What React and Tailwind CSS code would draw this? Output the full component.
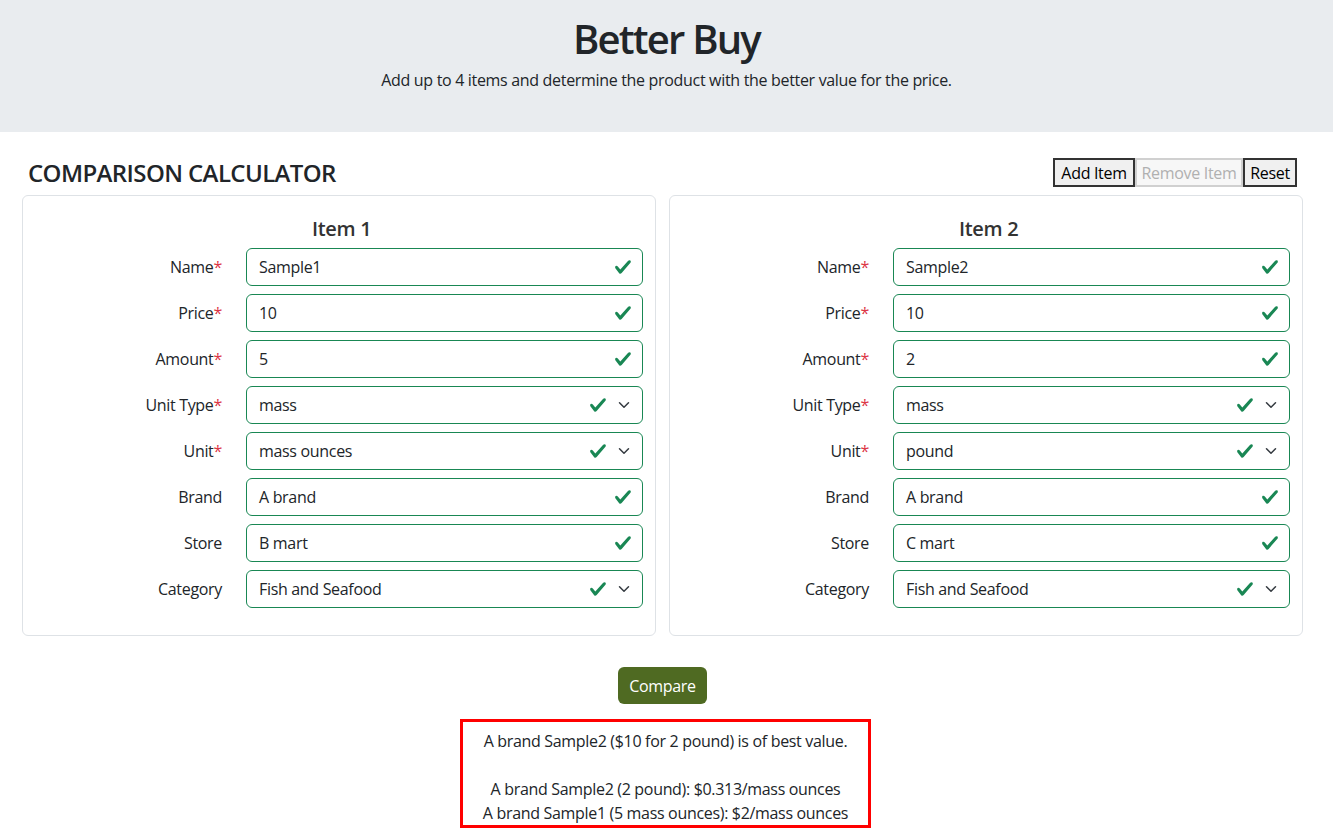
import React from 'react';

const font = { fontFamily: '"Open Sans", "Noto Sans", sans-serif' };

/* bootstrap-style valid check + select chevron */
const Check = () => (
  <svg viewBox="0 0 8 8" className="w-[18px] h-[18px]">
    <path fill="#198754" d="M2.3 6.73.6 4.53c-.4-1.04.46-1.4 1.1-.8l1.1 1.4 3.4-3.8c.6-.63 1.6-.27 1.2.7l-4 4.6c-.43.5-.8.4-1.1.1z" />
  </svg>
);

const Chevron = () => (
  <svg viewBox="0 0 16 16" className="w-4 h-3">
    <path fill="none" stroke="#343a40" strokeWidth="2" strokeLinecap="round" strokeLinejoin="round" d="m2 5 6 6 6-6" />
  </svg>
);

const Field = ({ label, required, value, select }) => (
  <>
    <label className="text-right text-[16px] text-[#212529]">
      {label}
      {required && <span className="text-[#dc3545]">*</span>}
    </label>
    <div className="h-[38px] border border-[#198754] rounded-md flex items-center pl-3 pr-[10px] text-[16px] text-[#212529]">
      <span className="flex-1">{value}</span>
      {select ? (
        <div className="flex items-center gap-[9px]">
          <Check />
          <Chevron />
        </div>
      ) : (
        <Check />
      )}
    </div>
  </>
);

const ItemCard = ({ title, item }) => (
  <div className="w-[634px] border border-[#dee2e6] rounded-md pt-[21px] pb-[27px]">
    <div className="grid grid-cols-[199px_397px] gap-x-6 gap-y-2 items-center">
      <div />
      <h5 className="text-[20px] leading-6 font-semibold text-[#333] mb-[-1px] pl-[66px]">{title}</h5>
      <Field label="Name" required value={item.name} />
      <Field label="Price" required value={item.price} />
      <Field label="Amount" required value={item.amount} />
      <Field label="Unit Type" required value={item.unitType} select />
      <Field label="Unit" required value={item.unit} select />
      <Field label="Brand" value={item.brand} />
      <Field label="Store" value={item.store} />
      <Field label="Category" value={item.category} select />
    </div>
  </div>
);

const items = [
  { name: 'Sample1', price: '10', amount: '5', unitType: 'mass', unit: 'mass ounces', brand: 'A brand', store: 'B mart', category: 'Fish and Seafood' },
  { name: 'Sample2', price: '10', amount: '2', unitType: 'mass', unit: 'pound', brand: 'A brand', store: 'C mart', category: 'Fish and Seafood' },
];

export default function App() {
  return (
    <div className="min-h-screen bg-white text-[#212529] tracking-[-0.02em]" style={font}>
      {/* — Banner — */}
      <header className="bg-[#e9ecef] h-[132px] pt-[15px] text-center">
        <h1 className="text-[40px] leading-[48px] font-semibold tracking-[-0.045em]">Better Buy</h1>
        <p className="mt-[5px] text-[16px] leading-6">
          Add up to 4 items and determine the product with the better value for the price.
        </p>
      </header>

      <main className="pl-[22px] pt-[26px]">
        {/* — Title + actions — */}
        <div className="w-[1281px] flex items-center justify-between px-[6px] h-[29px]">
          <h4 className="text-[24px] leading-[29px] font-semibold tracking-[-0.025em]">COMPARISON CALCULATOR</h4>
          <div className="flex text-[16px]">
            <button className="h-[29px] w-[82px] bg-[#f0f0f0] border-2 border-[#333] text-black">Add Item</button>
            <button disabled className="h-[29px] w-[108px] bg-[#f7f7f7] border-2 border-[#d0d0d0] text-[#b0b0b0]">Remove Item</button>
            <button className="h-[29px] w-[54px] bg-[#f0f0f0] border-2 border-[#333] text-black">Reset</button>
          </div>
        </div>

        {/* — Item cards — */}
        <div className="flex gap-[13px] mt-2">
          <ItemCard title="Item 1" item={items[0]} />
          <ItemCard title="Item 2" item={items[1]} />
        </div>

        {/* — Compare + result — */}
        <div className="w-[1281px] flex flex-col items-center mt-[31px]">
          <button className="h-[37px] w-[89px] rounded-md bg-[#4f6a22] text-white text-[16px]">Compare</button>
          <div className="mt-[15px] ml-[6px] w-[411px] border-[3px] border-[#ff0000] pt-[7px] text-center text-[16px] leading-6">
            <div>A brand Sample2 ($10 for 2 pound) is of best value.</div>
            <div className="h-6" />
            <div>A brand Sample2 (2 pound): $0.313/mass ounces</div>
            <div>A brand Sample1 (5 mass ounces): $2/mass ounces</div>
          </div>
        </div>
      </main>
    </div>
  );
}
